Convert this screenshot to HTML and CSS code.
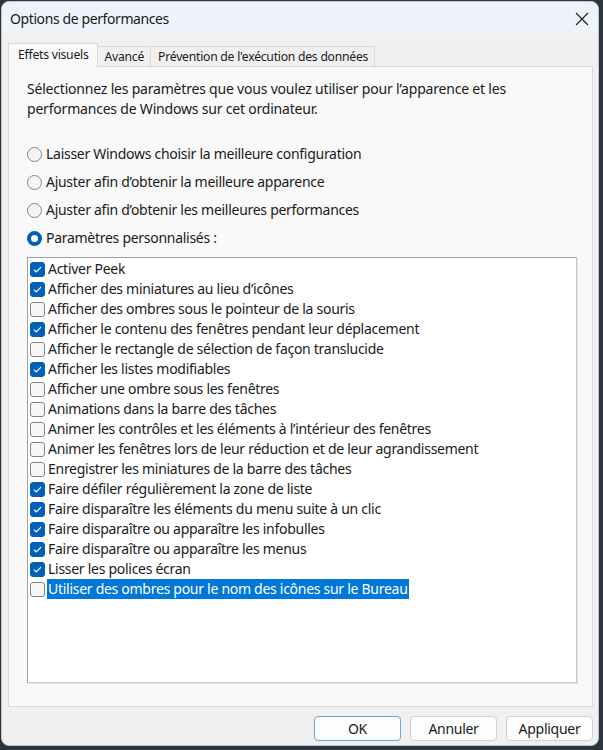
FILE: index.html
```html
<!DOCTYPE html>
<html lang="fr">
<head>
<meta charset="utf-8">
<title>Options de performances</title>
<link rel="stylesheet" href="styles.css">
</head>
<body>
<div class="window">
  <div class="titlebar">
    <span class="title">Options de performances</span>
    <span class="close"><svg width="14" height="14" viewBox="0 0 14 14"><path d="M1 1 L13 13 M13 1 L1 13" stroke="#1a1a1a" stroke-width="1.1" fill="none"/></svg></span>
  </div>
  <div class="body">
    <div class="tabs">
      <div class="tab active">Effets visuels</div>
      <div class="tab">Avancé</div>
      <div class="tab">Prévention de l'exécution des données</div>
    </div>
    <div class="panel">
      <p class="desc">Sélectionnez les paramètres que vous voulez utiliser pour l’apparence et les performances de Windows sur cet ordinateur.</p>
      <div class="radios">
        <div class="radio-row"><span class="radio"></span>Laisser Windows choisir la meilleure configuration</div>
        <div class="radio-row"><span class="radio"></span>Ajuster afin d’obtenir la meilleure apparence</div>
        <div class="radio-row"><span class="radio"></span>Ajuster afin d’obtenir les meilleures performances</div>
        <div class="radio-row"><span class="radio on"></span>Paramètres personnalisés :</div>
      </div>
      <div class="listbox">
        <div class="item"><span class="cb on"></span><span class="lbl">Activer Peek</span></div>
        <div class="item"><span class="cb on"></span><span class="lbl">Afficher des miniatures au lieu d’icônes</span></div>
        <div class="item"><span class="cb"></span><span class="lbl">Afficher des ombres sous le pointeur de la souris</span></div>
        <div class="item"><span class="cb on"></span><span class="lbl">Afficher le contenu des fenêtres pendant leur déplacement</span></div>
        <div class="item"><span class="cb"></span><span class="lbl">Afficher le rectangle de sélection de façon translucide</span></div>
        <div class="item"><span class="cb on"></span><span class="lbl">Afficher les listes modifiables</span></div>
        <div class="item"><span class="cb"></span><span class="lbl">Afficher une ombre sous les fenêtres</span></div>
        <div class="item"><span class="cb"></span><span class="lbl">Animations dans la barre des tâches</span></div>
        <div class="item"><span class="cb"></span><span class="lbl">Animer les contrôles et les éléments à l’intérieur des fenêtres</span></div>
        <div class="item"><span class="cb"></span><span class="lbl">Animer les fenêtres lors de leur réduction et de leur agrandissement</span></div>
        <div class="item"><span class="cb"></span><span class="lbl">Enregistrer les miniatures de la barre des tâches</span></div>
        <div class="item"><span class="cb on"></span><span class="lbl">Faire défiler régulièrement la zone de liste</span></div>
        <div class="item"><span class="cb on"></span><span class="lbl">Faire disparaître les éléments du menu suite à un clic</span></div>
        <div class="item"><span class="cb on"></span><span class="lbl">Faire disparaître ou apparaître les infobulles</span></div>
        <div class="item"><span class="cb on"></span><span class="lbl">Faire disparaître ou apparaître les menus</span></div>
        <div class="item"><span class="cb on"></span><span class="lbl">Lisser les polices écran</span></div>
        <div class="item"><span class="cb"></span><span class="lbl selected">Utiliser des ombres pour le nom des icônes sur le Bureau</span></div>
      </div>
    </div>
    <div class="buttons">
      <button class="btn default">OK</button>
      <button class="btn">Annuler</button>
      <button class="btn">Appliquer</button>
    </div>
  </div>
</div>
</body>
</html>
```
FILE: styles.css
```css
* { box-sizing: border-box; }
html, body { margin: 0; padding: 0; }
body {
  background: #2c3440;
  font-family: "Noto Sans", "Segoe UI", sans-serif;
  font-size: 14px;
  letter-spacing: -0.28px;
  color: #1a1a1a;
  width: 603px;
  height: 750px;
  overflow: hidden;
}
.window {
  margin: 1px 0 0 1px;
  width: 598px;
  height: 745px;
  background: #f0f0f0;
  border-radius: 8px;
  overflow: hidden;
  border: 1px solid #bfc4ca;
  display: flex;
  flex-direction: column;
}
.titlebar {
  height: 33px;
  background: #eef3f9;
  display: flex;
  align-items: center;
  justify-content: space-between;
  padding: 0 9px 0 8px;
  flex: none;
}
.title { font-size: 14px; letter-spacing: -0.4px; color: #1a1a1a; }
.close { display: flex; width: 14px; height: 14px; }
.body {
  flex: 1;
  padding: 8px 5px 0 6px;
  display: flex;
  flex-direction: column;
}
.tabs {
  display: flex;
  align-items: flex-end;
  height: 23px;
  position: relative;
  z-index: 1;
}
.tab {
  height: 20px;
  padding: 0 6px 0 7px;
  border: 1px solid #d9d9d9;
  border-bottom: none;
  border-left: none;
  background: #f0f0f0;
  font-size: 12.2px;
  letter-spacing: -0.25px;
  line-height: 20px;
  white-space: nowrap;
}
.tab.active {
  height: 24px;
  margin-bottom: -1px;
  border-left: 1px solid #d9d9d9;
  background: #f9f9f9;
  padding: 0 8px 0 9px;
  line-height: 21px;
}
.panel {
  height: 641px;
  background: #f9f9f9;
  border: 1px solid #d9d9d9;
  padding: 12px 15px 0 18px;
}
.desc {
  margin: 0;
  line-height: 20px;
  width: 515px;
  letter-spacing: -0.2px;
}
.radios {
  display: flex;
  flex-direction: column;
  gap: 8px;
  margin-top: 25px;
}
.radio-row {
  display: flex;
  align-items: center;
  height: 20px;
  line-height: 20px;
}
.radio {
  width: 15px;
  height: 15px;
  border-radius: 50%;
  border: 1px solid #858585;
  background: #f5f5f5;
  margin-right: 4px;
  flex: none;
}
.radio.on {
  border: 4.5px solid #005fb8;
  background: #fff;
}
.listbox {
  margin-top: 9px;
  height: 426px;
  background: #fff;
  border-top: 1px solid #a0a0a0;
  border-left: 1px solid #a0a0a0;
  border-right: 1px solid #c8c8c8;
  border-bottom: 1px solid #c8c8c8;
  box-shadow: 1px 1px 0 #e4e4e4;
  padding: 1px 0 0 2px;
}
.item {
  display: flex;
  align-items: center;
  height: 20px;
}
.cb {
  width: 15px;
  height: 15px;
  border: 1px solid #858585;
  border-radius: 3px;
  background: #f7f7f7;
  flex: none;
  margin-right: 2px;
}
.cb.on {
  border-color: #005fb8;
  background: #005fb8 url("data:image/svg+xml;utf8,<svg xmlns='http://www.w3.org/2000/svg' width='13' height='13' viewBox='0 0 13 13'><path d='M3 6.8 L5.3 9 L10 4.2' stroke='white' stroke-width='1.2' fill='none'/></svg>") center/13px 13px no-repeat;
}
.lbl {
  line-height: 20px;
  white-space: nowrap;
  padding: 0 1px;
}
.lbl.selected {
  background: #0078d7;
  color: #fff;
}
.buttons {
  display: flex;
  justify-content: flex-end;
  gap: 9px;
  padding-top: 9px;
}
.btn {
  width: 87px;
  height: 25px;
  border: 1px solid #d0d0d0;
  border-radius: 4px;
  background: #fdfdfd;
  font-family: inherit;
  font-size: 14px;
  letter-spacing: -0.28px;
  color: #1a1a1a;
  padding: 0;
}
.btn.default {
  border-color: #6fa3d9;
}
```
